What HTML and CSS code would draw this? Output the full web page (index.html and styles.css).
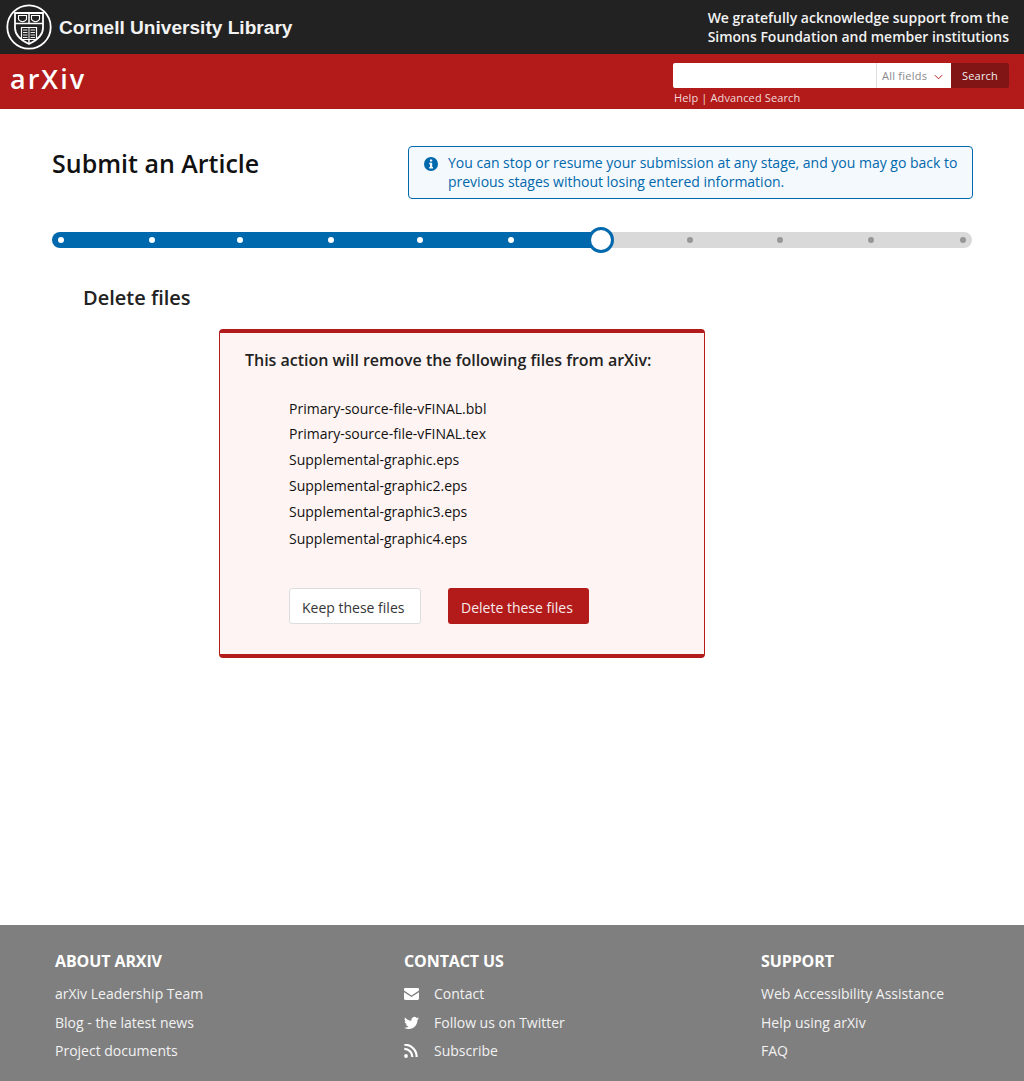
FILE: index.html
```html
<!DOCTYPE html>
<html lang="en">
<head>
<meta charset="utf-8">
<title>Submit an Article - arXiv</title>
<link rel="stylesheet" href="styles.css">
</head>
<body>
<header class="cul-bar">
  <a class="cul-brand">
    <svg class="seal" viewBox="0 0 46 46" aria-hidden="true">
      <circle cx="23" cy="23" r="21.7" fill="none" stroke="#fff" stroke-width="1.8"/>
      <path d="M9 9h28v15c0 7.500-6.500 12.500-14 16-7.500-3.500-14-8.500-14-16z" fill="none" stroke="#fff" stroke-width="1.800"/>
      <path d="M9 19.500h28" stroke="#fff" stroke-width="1.500"/>
      <path d="M23 9v10.500M23 36v4" stroke="#fff" stroke-width="1.500"/>
      <path d="M12.500 11.500h8v3.500c0 1.300-1.900 2.200-4 2.800-2.100-.6-4-1.500-4-2.800zM25.500 11.500h8v3.500c0 1.300-1.900 2.200-4 2.800-2.100-.6-4-1.500-4-2.800z" fill="none" stroke="#fff" stroke-width="1.100"/>
      <path d="M15.500 23.500h15v12h-15z" fill="none" stroke="#fff" stroke-width="1.200"/>
      <path d="M17 26h4.500M17 28.500h4.500M17 31h4.500M17 33.500h4.500M24.500 26h4.500M24.500 28.500h4.500M24.500 31h4.500M24.500 33.500h4.500M23 23.500v12" stroke="#fff" stroke-width=".9"/>
    </svg>
    <span class="cul-name">Cornell University Library</span>
  </a>
  <p class="cul-thanks">We gratefully acknowledge support from the<br>Simons Foundation and member institutions</p>
</header>
<div class="arxiv-bar">
  <a class="arxiv-logo">arXiv</a>
  <div class="search">
    <form class="search-row">
      <input class="search-input" type="text" aria-label="Search">
      <span class="search-field">All fields
        <svg class="chevron" viewBox="0 0 10 6" aria-hidden="true"><path d="M1 1l4 4 4-4" fill="none" stroke="#b31b1b" stroke-width="1.100"/></svg>
      </span>
      <button class="search-btn" type="button">Search</button>
    </form>
    <div class="search-links"><a>Help</a> | <a>Advanced Search</a></div>
  </div>
</div>
<main class="content">
  <div class="title-row">
    <h1 class="page-title">Submit an Article</h1>
    <div class="notice">
      <svg class="notice-icon" viewBox="0 0 14 14" aria-hidden="true">
        <circle cx="7" cy="7" r="7" fill="#0068ac"/>
        <rect x="5.900" y="2.400" width="2.300" height="2.200" rx=".4" fill="#f4f9fd"/>
        <path d="M5.200 5.700h3v4.300h.8v1.500H5.200V10H6V7.200h-.8z" fill="#f4f9fd"/>
      </svg>
      <p class="notice-text">You can stop or resume your submission at any stage, and you may go back to previous stages without losing entered information.</p>
    </div>
  </div>
  <div class="progress" aria-hidden="true">
    <i class="dot done"></i><i class="dot done"></i><i class="dot done"></i><i class="dot done"></i><i class="dot done"></i><i class="dot done"></i>
    <i class="dot current"></i>
    <i class="dot"></i><i class="dot"></i><i class="dot"></i><i class="dot"></i>
  </div>
  <h2 class="section-title">Delete files</h2>
  <section class="confirm">
    <h3 class="confirm-title">This action will remove the following files from arXiv:</h3>
    <ul class="file-list">
      <li>Primary-source-file-vFINAL.bbl</li>
      <li>Primary-source-file-vFINAL.tex</li>
      <li>Supplemental-graphic.eps</li>
      <li>Supplemental-graphic2.eps</li>
      <li>Supplemental-graphic3.eps</li>
      <li>Supplemental-graphic4.eps</li>
    </ul>
    <div class="actions">
      <button class="btn btn-keep" type="button">Keep these files</button>
      <button class="btn btn-delete" type="button">Delete these files</button>
    </div>
  </section>
</main>
<footer class="footer">
  <div class="foot-col col-about">
    <h4 class="foot-title">ABOUT ARXIV</h4>
    <ul class="foot-list">
      <li>arXiv Leadership Team</li>
      <li>Blog - the latest news</li>
      <li>Project documents</li>
    </ul>
  </div>
  <div class="foot-col col-contact">
    <h4 class="foot-title">CONTACT US</h4>
    <ul class="foot-list">
      <li><svg class="foot-icon" viewBox="0 0 14 11" aria-hidden="true"><path d="M0 2.200V1.200C0 .5.500 0 1.200 0h11.600C13.500 0 14 .5 14 1.200v1L7 6.800zM0 3.800l7 4.500 7-4.500v6C14 10.500 13.500 11 12.800 11H1.200C.5 11 0 10.500 0 9.800z" fill="#fff"/></svg>Contact</li>
      <li><svg class="foot-icon" viewBox="0 1 24 22" aria-hidden="true"><path d="M23.950 4.570a10 10 0 0 1-2.820.770 4.960 4.960 0 0 0 2.160-2.720 9.900 9.900 0 0 1-3.120 1.180 4.920 4.920 0 0 0-8.380 4.480C7.690 8.100 4.070 6.130 1.640 3.160a4.820 4.820 0 0 0-.67 2.480c0 1.710.87 3.210 2.190 4.100a4.900 4.900 0 0 1-2.230-.62v.060a4.920 4.920 0 0 0 3.950 4.830 5 5 0 0 1-2.210.08 4.940 4.940 0 0 0 4.600 3.420A9.870 9.870 0 0 1 0 19.540a14 14 0 0 0 7.560 2.210c9.050 0 14-7.500 14-13.980 0-.21 0-.42-.02-.63a9.940 9.940 0 0 0 2.460-2.550z" fill="#fff"/></svg>Follow us on Twitter</li>
      <li><svg class="foot-icon" viewBox="0 0 15 14" aria-hidden="true"><circle cx="2" cy="12" r="1.900" fill="#fff"/><path d="M.3 5.600a8.100 8.100 0 0 1 8.100 8.100M.3 1.300a12.400 12.400 0 0 1 12.400 12.400" transform="translate(0 -.7)" fill="none" stroke="#fff" stroke-width="2.200"/></svg>Subscribe</li>
    </ul>
  </div>
  <div class="foot-col col-support">
    <h4 class="foot-title">SUPPORT</h4>
    <ul class="foot-list">
      <li>Web Accessibility Assistance</li>
      <li>Help using arXiv</li>
      <li>FAQ</li>
    </ul>
  </div>
</footer>
</body>
</html>
```
FILE: styles.css
```css
* { box-sizing: border-box; }
html, body { margin: 0; padding: 0; }
body {
  width: 1024px;
  height: 1081px;
  display: flex;
  flex-direction: column;
  background: #fff;
  color: #111;
  font-family: "Open Sans", "Noto Sans", sans-serif;
  font-size: 14px;
}
p, h1, h2, h3, h4, ul { margin: 0; padding: 0; }
ul { list-style: none; }

.cul-bar {
  height: 54px;
  background: #222;
  color: #fff;
  display: flex;
  align-items: center;
  justify-content: space-between;
  padding: 0 15px 0 6px;
}
.cul-brand { display: flex; align-items: center; gap: 7px; }
.seal { width: 46px; height: 46px; display: block; }
.cul-name {
  font-family: "Liberation Sans", Arial, sans-serif;
  font-weight: 700;
  font-size: 19.100px;
  line-height: 24px;
  padding-top: 2px;
  color: #f2f2f2;
}
.cul-thanks { font-size: 14px; line-height: 19px; font-weight: 600; letter-spacing: -.01px; color: #f2f2f2; }

.arxiv-bar {
  height: 55px;
  background: #b31b1b;
  display: flex;
  justify-content: space-between;
  padding: 9px 15px 0 10px;
}
.arxiv-logo {
  font-family: "Open Sans", sans-serif;
  color: #fff;
  font-size: 27px;
  font-weight: 600;
  letter-spacing: 2px;
  line-height: 32px;
}
.search { width: 336px; }
.search-row { display: flex; height: 25px; }
.search-input {
  width: 203px;
  height: 25px;
  border: 0;
  background: #fff;
  padding: 0;
  border-radius: 2px 0 0 2px;
}
.search-field {
  width: 75px;
  background: #fff;
  border-left: 1px solid #ddd;
  color: #8a8a8a;
  font-size: 11px;
  letter-spacing: .25px;
  padding-left: 5px;
  display: flex;
  align-items: center;
  gap: 7px;
}
.chevron { width: 9px; height: 6px; margin-top: 3px; }
.search-btn {
  width: 58px;
  border: 0;
  background: #811414;
  color: #eee;
  font: 400 11px "Open Sans", sans-serif;
  letter-spacing: .2px;
  border-radius: 0 2px 2px 0;
  padding: 0;
}
.search-links {
  color: #f0dada;
  font-size: 11px;
  line-height: 15px;
  letter-spacing: .13px;
  margin: 2px 0 0 1px;
}

.content { flex: 1; padding: 36px 52px 0; }
.title-row { display: flex; justify-content: space-between; align-items: flex-start; }
.page-title { font-size: 25px; font-weight: 600; line-height: 36px; color: #111; }
.notice {
  width: 565px;
  height: 53px;
  margin: 1px -1px 0 0;
  border: 1px solid #0068ac;
  border-radius: 4px;
  background: #f4f9fd;
  padding: 6px 10px 0 15px;
  display: flex;
  gap: 10px;
}
.notice-icon { width: 14px; height: 14px; flex: none; margin-top: 4px; }
.notice-text { color: #0068ac; font-size: 14px; line-height: 19px; letter-spacing: -.01px; }

.progress {
  margin-top: 33px;
  height: 16px;
  width: 920px;
  border-radius: 8px;
  background: linear-gradient(to right, #0068ac 549px, #d9d9d9 549px);
  display: grid;
  grid-template-columns: 91px 88px 91px 89px 91px 90px 89px 90px 91px 92px 6px;
  align-items: center;
  padding: 0 0 0 6px;
}
.dot { width: 6px; height: 6px; border-radius: 50%; background: #979797; display: block; }
.dot.done { background: #fff; }
.dot.current {
  width: 26px;
  height: 26px;
  margin: -5px 0 -5px -10px;
  background: #fff;
  border: 3px solid #0068ac;
}

.section-title {
  font-size: 20px;
  font-weight: 600;
  line-height: 26px;
  margin: 37px 0 0 31px;
  color: #222;
}
.confirm {
  width: 486px;
  height: 329px;
  margin: 18px 0 0 167px;
  border: 1px solid #b31b1b;
  border-top-width: 4px;
  border-bottom-width: 4px;
  border-radius: 4px;
  background: #fef4f3;
  padding: 15px 25px 0;
}
.confirm-title { font-size: 16px; font-weight: 600; line-height: 24px; letter-spacing: -.02px; color: #222; }
.file-list { margin: 24px 0 0 44px; color: #111; }
.file-list li { line-height: 26px; height: 26px; font-size: 14px; }
.file-list li:first-child { height: 25px; }
.file-list li:last-child { line-height: 28px; }
.actions { margin: 37px 0 0 44px; display: flex; gap: 27px; }
.btn {
  height: 36px;
  font: 400 14px "Open Sans", sans-serif;
  border-radius: 3px;
  padding: 3px 0 0;
  white-space: nowrap;
  text-align: left;
}
.btn-keep { width: 132px; background: #fff; border: 1px solid #ddd; color: #363636; padding-left: 12px; }
.btn-delete { width: 141px; background: #b31b1b; border: 0; color: #f5eaea; padding-left: 13px; }

.footer {
  height: 156px;
  flex: none;
  background: #7f7f7f;
  color: #f2f2f2;
  display: grid;
  grid-template-columns: 349px 357px 1fr;
  padding: 25px 0 0 55px;
}
.foot-title { font-size: 16px; font-weight: 700; line-height: 22px; letter-spacing: -.1px; color: #fff; margin-bottom: 12px; }
.foot-list li { font-size: 14px; line-height: 20px; margin-bottom: 8.500px; display: flex; align-items: center; }
.foot-icon { width: 15px; height: 14px; flex: none; margin-right: 15px; }
```
